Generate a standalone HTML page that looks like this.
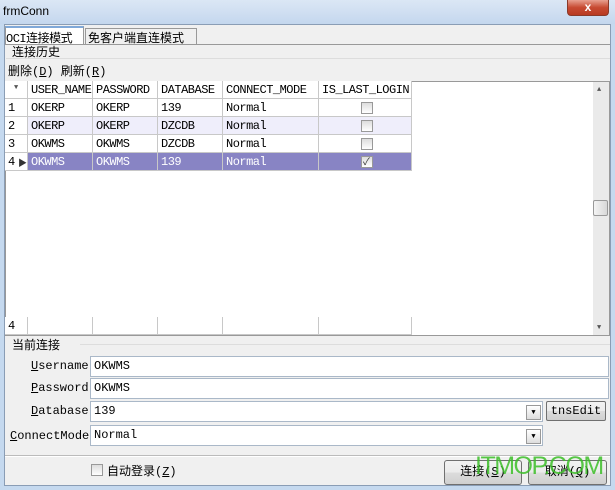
<!DOCTYPE html><html><head><style>
*{margin:0;padding:0;box-sizing:border-box}
body{width:615px;height:490px;overflow:hidden;background:#c5d9ef;font-family:"Liberation Mono","Noto Sans CJK SC",monospace;font-size:12px;color:#000;position:relative}
.a{position:absolute}
.cell{position:absolute;height:18px;line-height:18px;padding-left:3px;border-right:1px solid #c8c8c8;border-bottom:1px solid #c8c8c8;white-space:nowrap;overflow:hidden;letter-spacing:-0.5px}
.cb{position:absolute;width:12px;height:12px;border:1px solid #999;background:linear-gradient(#ddd,#fff)}
.inp{position:absolute;background:#fff;border:1px solid #aab8c8;height:21px;line-height:19px;padding-left:3px}
.dd{position:absolute;width:15px;height:15px;border:1px solid #999;background:linear-gradient(#fff,#ddd);font-size:7px;text-align:center;line-height:14px}
.btn{position:absolute;border:1px solid #707070;border-radius:3px;background:linear-gradient(#f2f2f2,#ebebeb 50%,#dcdcdc 50%,#d0d0d0);text-align:center;font-family:"Liberation Mono","Noto Sans CJK SC",monospace}
</style></head><body>
<div class="a" style="left:0;top:0;width:615px;height:24px;background:linear-gradient(#dbe7f5,#c4d7ee)"></div>
<div class="a" style="left:3px;top:4px;font-family:'Liberation Sans',sans-serif;font-size:12px">frmConn</div>
<div class="a" style="left:567px;top:0;width:42px;height:16px;border:1px solid #8a3a2a;border-top:none;border-radius:0 0 4px 4px;background:linear-gradient(#e8a090,#c74a32 50%,#b83a22);color:#fff;font:bold 12px 'Liberation Sans',sans-serif;text-align:center;line-height:14px">x</div>
<div class="a" style="left:4px;top:24px;width:607px;height:462px;background:#f0f0f0;border:1px solid #8a9db5"></div>
<div class="a" style="left:5px;top:26px;width:79px;height:19px;background:#fff;border:1px solid #999;border-bottom:none;border-top:2px solid #7fa8d8"></div>
<div class="a" style="left:6px;top:29px;letter-spacing:-0.5px">OCI连接模式</div>
<div class="a" style="left:85px;top:28px;width:112px;height:17px;background:#f0f0f0;border:1px solid #999;border-bottom:none"></div>
<div class="a" style="left:88px;top:29px">免客户端直连模式</div>
<div class="a" style="left:5px;top:44px;width:605px;height:1px;background:#999"></div>
<div class="a" style="left:12px;top:43px">连接历史</div>
<div class="a" style="left:6px;top:58px;width:604px;height:1px;background:#ddd"></div>
<div class="a" style="left:8px;top:62px">删除(<u>D</u>) 刷新(<u>R</u>)</div>
<div class="a" style="left:5px;top:81px;width:605px;height:255px;background:#fff;border:1px solid #999"></div>
<div class="a" style="left:593px;top:82px;width:16px;height:253px;background:#eaeaea"></div>
<div class="a" style="left:597px;top:86px;font-size:7px;color:#555">▲</div>
<div class="a" style="left:597px;top:324px;font-size:7px;color:#555">▼</div>
<div class="a" style="left:593px;top:200px;width:15px;height:16px;border:1px solid #999;border-radius:2px;background:linear-gradient(90deg,#f4f4f4,#d8d8d8)"></div>
<div id="g"></div>
<div class="a" style="left:12px;top:336px">当前连接</div>
<div class="a" style="left:80px;top:344px;width:530px;height:1px;background:#ddd"></div>
<div class="a" style="left:31px;top:359px"><u>U</u>sername</div>
<div class="a" style="left:31px;top:381px"><u>P</u>assword</div>
<div class="a" style="left:31px;top:404px"><u>D</u>atabase</div>
<div class="a" style="left:10px;top:429px"><u>C</u>onnectMode</div>
<div class="inp" style="left:90px;top:356px;width:519px">OKWMS</div>
<div class="inp" style="left:90px;top:378px;width:519px">OKWMS</div>
<div class="inp" style="left:90px;top:401px;width:453px">139</div>
<div class="dd" style="left:526px;top:405px">▼</div>
<div class="btn" style="left:546px;top:401px;width:60px;height:20px;line-height:18px;border-radius:2px">tnsEdit</div>
<div class="inp" style="left:90px;top:425px;width:453px">Normal</div>
<div class="dd" style="left:526px;top:429px">▼</div>
<div class="a" style="left:5px;top:455px;width:605px;height:1px;background:#bbb"></div>
<div class="a" style="left:5px;top:456px;width:605px;height:1px;background:#fff"></div>
<div class="cb" style="left:91px;top:464px"></div>
<div class="a" style="left:107px;top:462px">自动登录(<u>Z</u>)</div>
<div class="btn" style="left:444px;top:460px;width:78px;height:25px;line-height:23px">连接(<u>S</u>)</div>
<div class="btn" style="left:528px;top:460px;width:79px;height:25px;line-height:23px">取消(<u>Q</u>)</div>
<div class="a" style="left:475px;top:452px;font:25px 'Liberation Sans',sans-serif;color:rgba(60,190,40,0.85);letter-spacing:-1.5px">ITMOP.COM</div>
<script>
var cols=[[5,23],[28,65],[93,65],[158,65],[223,96],[319,93]];
var rows=[["","USER_NAME","PASSWORD","DATABASE","CONNECT_MODE","IS_LAST_LOGIN"],
["1","OKERP","OKERP","139","Normal",0],["2","OKERP","OKERP","DZCDB","Normal",0],
["3","OKWMS","OKWMS","DZCDB","Normal",0],["4","OKWMS","OKWMS","139","Normal",1]];
var h="";
function row(r,y,bg,fg){for(var c=0;c<6;c++){var x=cols[c][0],w=cols[c][1],b=bg;if(c==0)b="#fff";
var t=r[c];if(c==5&&y>81)t="";
h+='<div class="cell" style="left:'+x+'px;top:'+y+'px;width:'+w+'px;background:'+b+';color:'+(c==0?'#000':fg)+'">'+t+'</div>';
if(c==5&&y>81&&r[5]!=="")h+='<div class="cb" style="left:361px;top:'+(y+3)+'px">'+(r[5]?'<span style="position:absolute;left:1px;top:-4px;font-size:10px;color:#333">✓</span>':'')+'</div>';}}
row(rows[0],81,"#fff","#000");
h+='<div class="a" style="left:14px;top:84px;font-size:7px;color:#555">▼</div>';
row(rows[1],99,"#fff","#000");row(rows[2],117,"#efeefb","#000");row(rows[3],135,"#fff","#000");row(rows[4],153,"#8884c4","#fff");
h+='<div class="a" style="left:18px;top:156px;font-size:9px;color:#333">▶</div>';
row(["4","","","","",""],317,"#fff","#000");
document.getElementById("g").innerHTML=h;
</script>
</body></html>
